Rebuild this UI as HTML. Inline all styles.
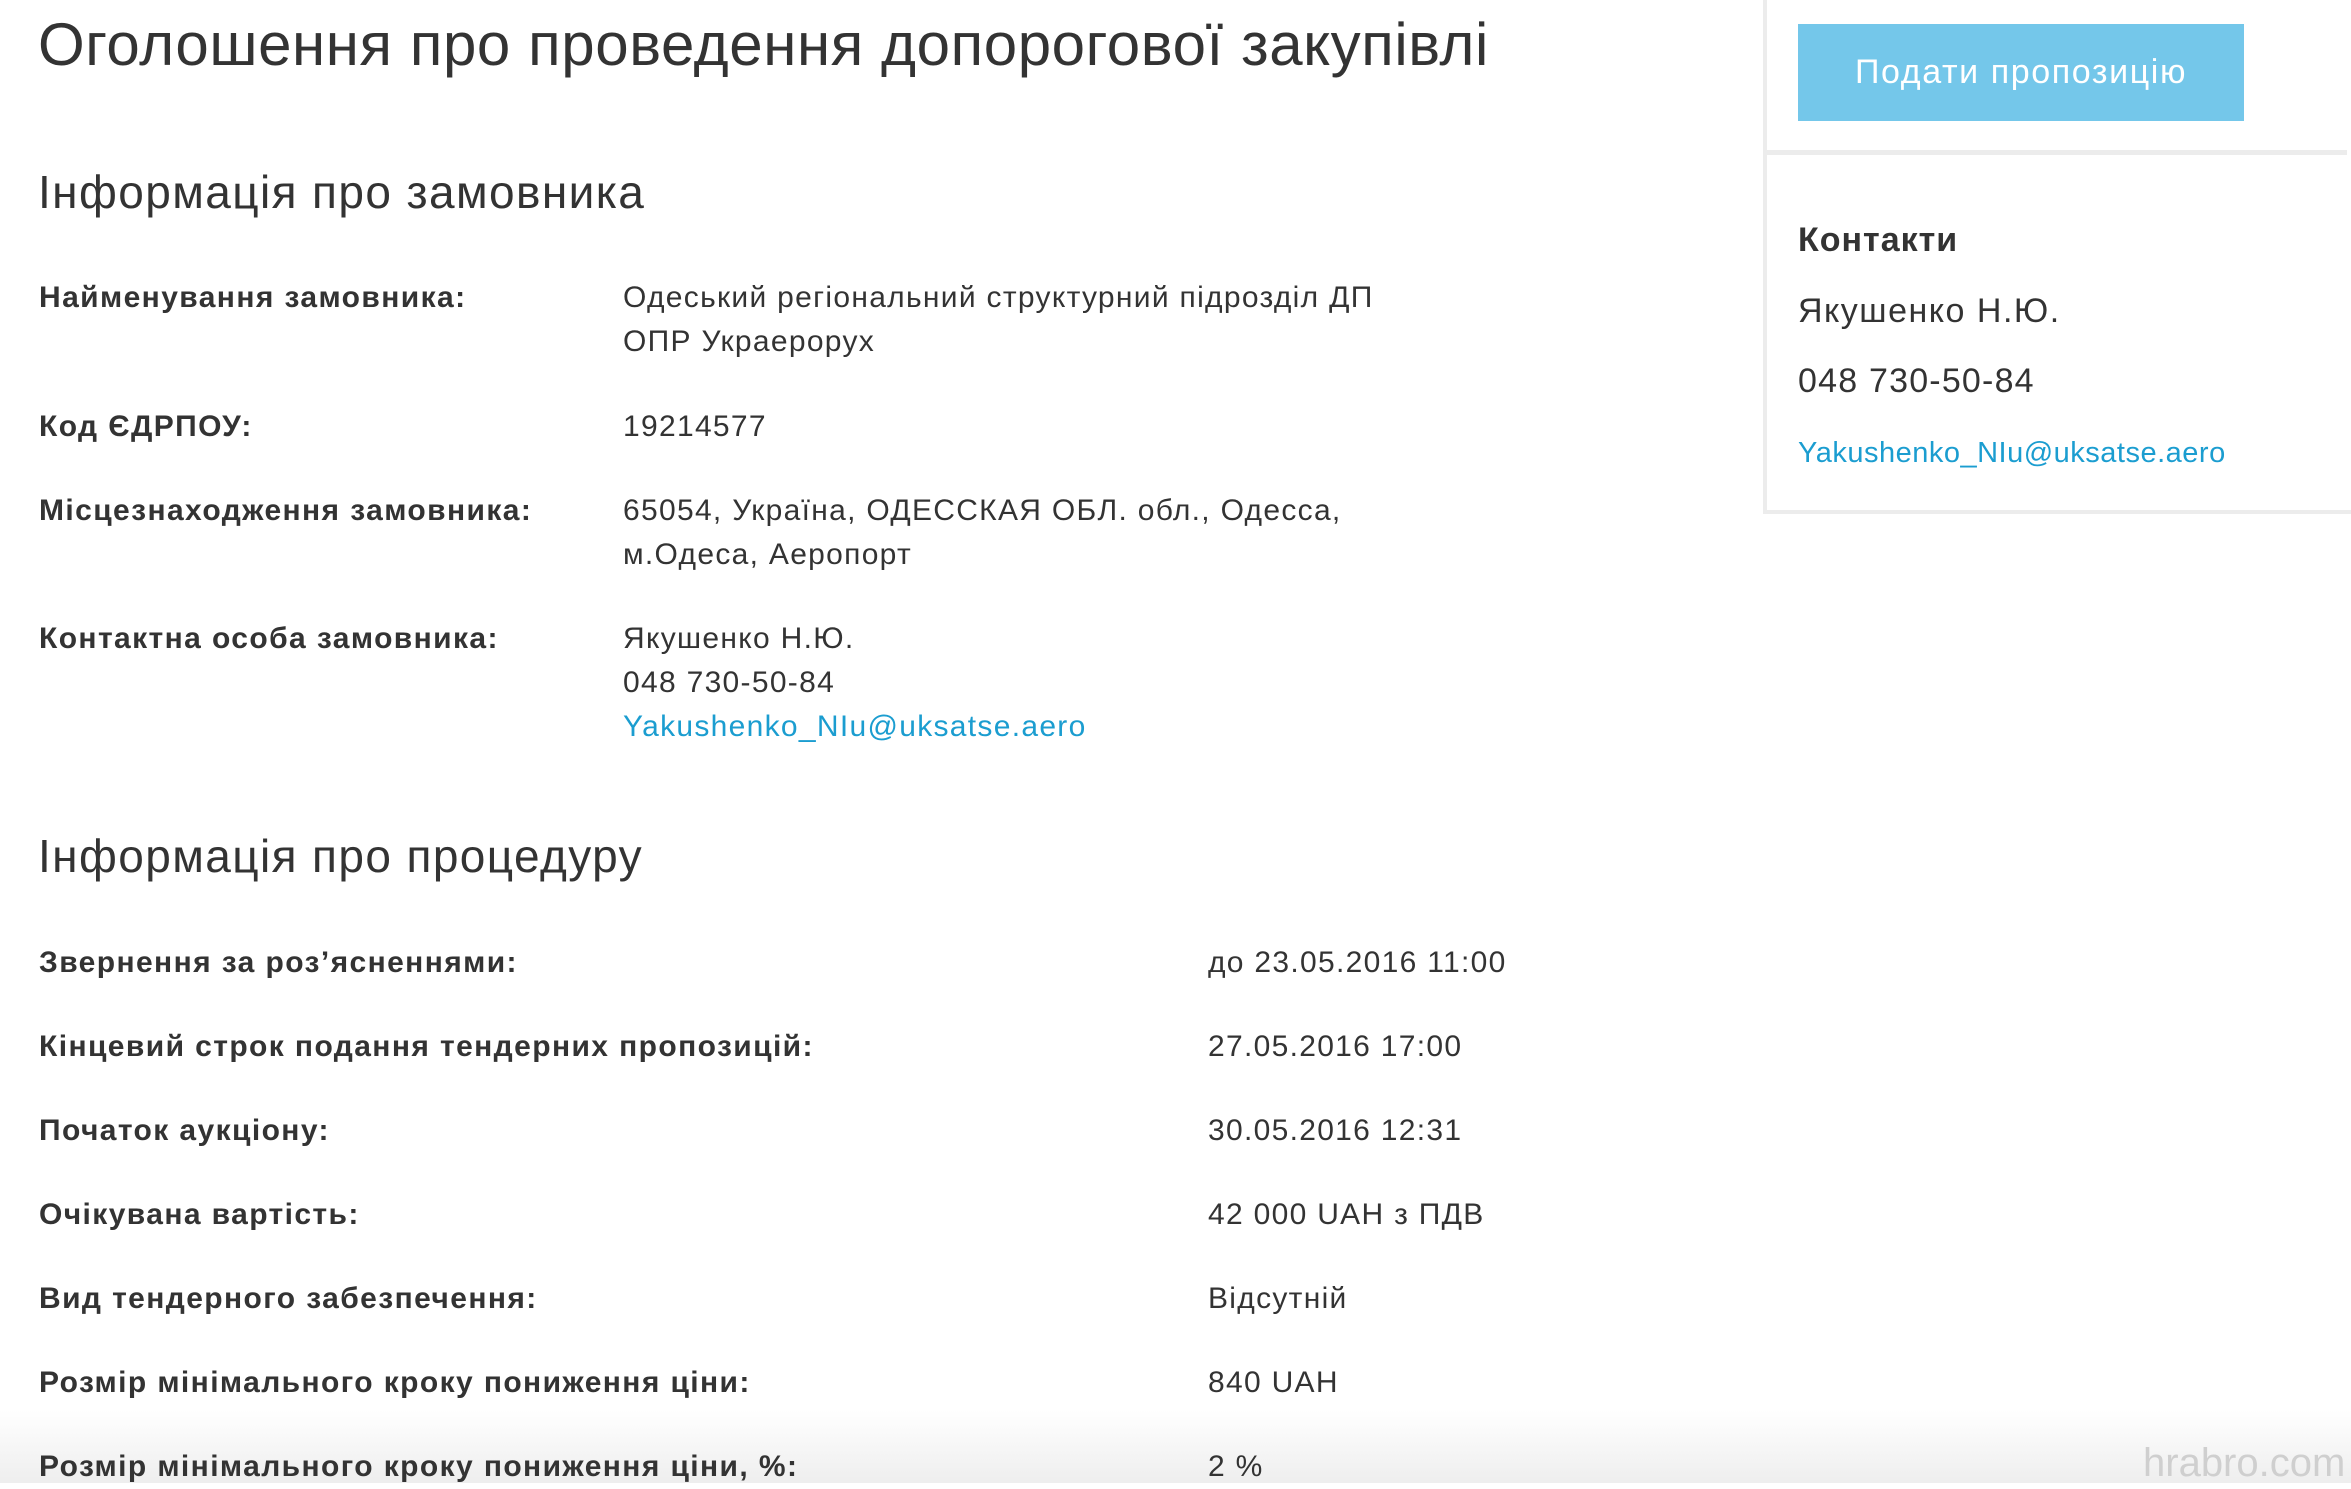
<!DOCTYPE html>
<html><head><meta charset="utf-8"><style>
html,body{margin:0;padding:0;background:#fff;}
body{width:2351px;height:1483px;position:relative;overflow:hidden;font-family:"Liberation Sans",Arial,sans-serif;color:#333;}
.t{position:absolute;white-space:nowrap;z-index:2;}
h1{position:absolute;left:38px;top:8px;margin:0;font-weight:normal;font-size:60px;letter-spacing:0.6px;line-height:74px;white-space:nowrap;color:#333;}
h2{position:absolute;left:38px;margin:0;font-weight:normal;font-size:46px;letter-spacing:1.4px;line-height:60px;white-space:nowrap;color:#333;}
.l{position:absolute;left:39px;font-weight:bold;font-size:30px;letter-spacing:1.4px;line-height:44px;white-space:nowrap;z-index:2;}
.v{position:absolute;font-size:30px;letter-spacing:1.3px;line-height:44px;white-space:nowrap;z-index:2;}
a{color:#1b9dd0;text-decoration:none;}
.side{position:absolute;left:1763px;top:-10px;width:584px;height:520px;border:4px solid #ececec;border-top:none;background:#fff;}
.div{position:absolute;left:1767px;top:150px;width:580px;height:5px;background:#ececec;}
.btn{position:absolute;left:1798px;top:24px;width:446px;height:97px;background:#74c7ea;color:#fff;font-size:34px;letter-spacing:1.6px;line-height:97px;text-align:center;}
.fade{position:absolute;left:0;top:1410px;width:2351px;height:73px;background:linear-gradient(rgba(245,245,245,0),rgba(238,238,238,1));z-index:1;}
</style></head><body>
<h1>Оголошення про проведення допорогової закупівлі</h1>

<h2 style="top:162px">Інформація про замовника</h2>

<div class="l" style="top:276px">Найменування замовника:</div>
<div class="v" style="left:623px;top:276px">Одеський регіональний структурний підрозділ ДП<br>ОПР Украерорух</div>

<div class="l" style="top:405px">Код ЄДРПОУ:</div>
<div class="v" style="left:623px;top:405px">19214577</div>

<div class="l" style="top:489px">Місцезнаходження замовника:</div>
<div class="v" style="left:623px;top:489px">65054, Україна, ОДЕССКАЯ ОБЛ. обл., Одесса,<br>м.Одеса, Аеропорт</div>

<div class="l" style="top:617px">Контактна особа замовника:</div>
<div class="v" style="left:623px;top:617px">Якушенко Н.Ю.<br>048 730-50-84<br><a>Yakushenko_NIu@uksatse.aero</a></div>

<h2 style="top:826px">Інформація про процедуру</h2>

<div class="l" style="top:941px">Звернення за роз’ясненнями:</div>
<div class="v" style="left:1208px;top:941px">до 23.05.2016 11:00</div>
<div class="l" style="top:1025px">Кінцевий строк подання тендерних пропозицій:</div>
<div class="v" style="left:1208px;top:1025px">27.05.2016 17:00</div>
<div class="l" style="top:1109px">Початок аукціону:</div>
<div class="v" style="left:1208px;top:1109px">30.05.2016 12:31</div>
<div class="l" style="top:1193px">Очікувана вартість:</div>
<div class="v" style="left:1208px;top:1193px">42 000 UAH з ПДВ</div>
<div class="l" style="top:1277px">Вид тендерного забезпечення:</div>
<div class="v" style="left:1208px;top:1277px">Відсутній</div>
<div class="l" style="top:1361px">Розмір мінімального кроку пониження ціни:</div>
<div class="v" style="left:1208px;top:1361px">840 UAH</div>
<div class="l" style="top:1445px">Розмір мінімального кроку пониження ціни, %:</div>
<div class="v" style="left:1208px;top:1445px">2 %</div>

<div class="side"></div>
<div class="div"></div>
<div class="btn">Подати пропозицію</div>
<div class="t" style="left:1798px;top:218px;font-size:34px;font-weight:bold;letter-spacing:1px;line-height:44px">Контакти</div>
<div class="t" style="left:1798px;top:289px;font-size:34px;letter-spacing:1.5px;line-height:44px">Якушенко Н.Ю.</div>
<div class="t" style="left:1798px;top:359px;font-size:34px;letter-spacing:1.2px;line-height:44px">048 730-50-84</div>
<div class="t" style="left:1798px;top:433px;font-size:29px;letter-spacing:0.5px;line-height:40px"><a>Yakushenko_NIu@uksatse.aero</a></div>

<div class="fade"></div>
<div class="t" style="left:2143px;top:1443px;font-size:40px;line-height:40px;color:#cfcfcf">hrabro.com</div>
</body></html>
